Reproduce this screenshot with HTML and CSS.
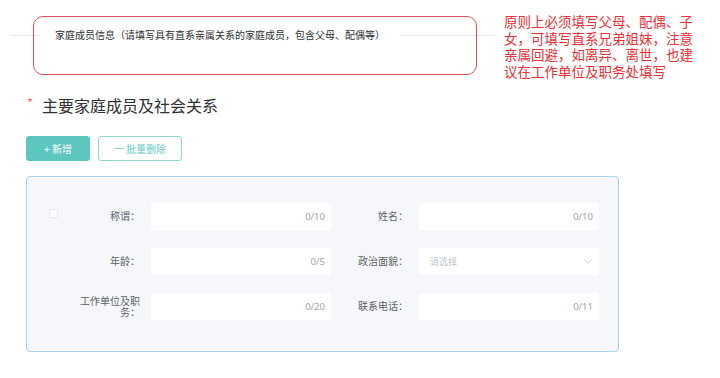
FILE: index.html
```html
<!DOCTYPE html>
<html lang="zh-CN">
<head>
<meta charset="utf-8">
<title>家庭成员信息</title>
<link rel="stylesheet" href="styles.css">
</head>
<body>
<div class="page">
  <div class="top">
    <div class="divider-area">
      <div class="divider">
        <span class="line line-start"></span>
        <span class="divider-text">家庭成员信息（请填写具有直系亲属关系的家庭成员，包含父母、配偶等）</span>
        <span class="line line-end"></span>
      </div>
      <div class="mark"></div>
    </div>
    <div class="note">原则上必须填写父母、配偶、子<br>女，可填写直系兄弟姐妹，注意<br>亲属回避，如离异、离世，也建<br>议在工作单位及职务处填写</div>
  </div>

  <h2 class="title"><span class="star">*</span>主要家庭成员及社会关系</h2>

  <div class="actions">
    <button class="btn btn-primary">+ 新增</button>
    <button class="btn btn-plain">一 批量删除</button>
  </div>

  <div class="card">
    <div class="check-col"><span class="checkbox"></span></div>
    <div class="form-grid">
      <div class="field">
        <label class="label">称谓：</label>
        <div class="input"><span class="count">0/10</span></div>
      </div>
      <div class="field">
        <label class="label">姓名：</label>
        <div class="input"><span class="count">0/10</span></div>
      </div>
      <div class="field">
        <label class="label">年龄：</label>
        <div class="input"><span class="count">0/5</span></div>
      </div>
      <div class="field">
        <label class="label">政治面貌：</label>
        <div class="input select">
          <span class="placeholder">请选择</span>
          <svg class="chevron" width="8" height="5" viewBox="0 0 8 5"><path d="M0.5 0.8 L4 4.2 L7.5 0.8" fill="none" stroke="#c0c4cc" stroke-width="0.9"/></svg>
        </div>
      </div>
      <div class="field">
        <label class="label">工作单位及职务：</label>
        <div class="input"><span class="count">0/20</span></div>
      </div>
      <div class="field">
        <label class="label">联系电话：</label>
        <div class="input"><span class="count">0/11</span></div>
      </div>
    </div>
  </div>
</div>
</body>
</html>
```

FILE: styles.css
```css
* { box-sizing: border-box; }

html, body {
  margin: 0;
  padding: 0;
  background: #ffffff;
}

body {
  font-family: "Noto Sans", "Noto Sans CJK SC", sans-serif;
  color: #606266;
  width: 720px;
  height: 378px;
  overflow: hidden;
}

.page {
  padding: 0;
}

.top {
  display: flex;
  height: 95px;
}

.divider-area {
  position: relative;
  width: 485px;
  margin-left: 10px;
}

.divider {
  display: flex;
  align-items: center;
  margin-top: 29px;
  height: 12px;
}

.line {
  height: 1px;
  background: #e4e7ed;
}

.line-start { width: 30px; }
.line-end { flex: 1; }

.divider-text {
  padding: 0 15px;
  font-family: "Noto Sans CJK SC", sans-serif;
  font-size: 10px;
  line-height: 12px;
  color: #303133;
  white-space: nowrap;
}

.mark {
  position: absolute;
  left: 23px;
  top: 16px;
  width: 444px;
  height: 59px;
  border: 1.5px solid #d6505a;
  border-radius: 10px;
}

.note {
  margin-left: 9px;
  margin-top: 13px;
  font-family: "Noto Sans CJK SC", sans-serif;
  font-size: 13.5px;
  line-height: 16.7px;
  color: #e8303a;
  white-space: nowrap;
}

.title {
  margin: 0 0 21px 27px;
  height: 20px;
  display: flex;
  align-items: center;
  font-family: "Noto Sans CJK SC", sans-serif;
  font-size: 16px;
  font-weight: 400;
  line-height: 20px;
  color: #303133;
}

.star {
  color: #f56c6c;
  font-size: 13px;
  width: 15px;
  margin-top: -4px;
}

.actions {
  display: flex;
  gap: 8px;
  margin-left: 26px;
  height: 25px;
}

.btn {
  height: 25px;
  border-radius: 3px;
  font-family: "Noto Sans CJK SC", sans-serif;
  font-size: 10px;
  line-height: 1;
  padding: 0;
  cursor: pointer;
}

.btn-primary {
  width: 64px;
  background: #5cc6bf;
  border: 1px solid #5cc6bf;
  color: #ffffff;
}

.btn-plain {
  width: 84px;
  background: #ffffff;
  border: 1px solid #8dd7d1;
  color: #6ccbc4;
}

.card {
  display: flex;
  margin: 15px 0 0 26px;
  width: 593px;
  height: 176px;
  background: #f5f7fa;
  border: 1px solid #a9d1f0;
  border-radius: 4px;
  padding: 26px 19px 0 22px;
}

.check-col {
  width: 22px;
  padding-top: 6px;
}

.checkbox {
  display: block;
  width: 9px;
  height: 9px;
  background: #ffffff;
  border: 1px solid #e4e7ed;
  border-radius: 2px;
}

.form-grid {
  display: grid;
  grid-template-columns: 260px 260px;
  column-gap: 8px;
  row-gap: 18px;
  align-content: start;
}

.field {
  display: flex;
  align-items: center;
  height: 27px;
}

.label {
  width: 80px;
  padding-right: 11px;
  text-align: right;
  font-family: "Noto Sans CJK SC", sans-serif;
  font-size: 10px;
  line-height: 10.5px;
  color: #606266;
}

.input {
  width: 180px;
  height: 27px;
  background: #ffffff;
  border-radius: 3px;
  display: flex;
  align-items: center;
  justify-content: flex-end;
  padding: 0 6px 0 11px;
}

.count {
  font-family: "Noto Sans", sans-serif;
  font-size: 9.5px;
  color: #a0a3a8;
}

.select {
  justify-content: space-between;
  padding-right: 7px;
}

.placeholder {
  font-family: "Noto Sans CJK SC", sans-serif;
  font-size: 9px;
  color: #c0c4cc;
}

.chevron {
  display: block;
}
```
